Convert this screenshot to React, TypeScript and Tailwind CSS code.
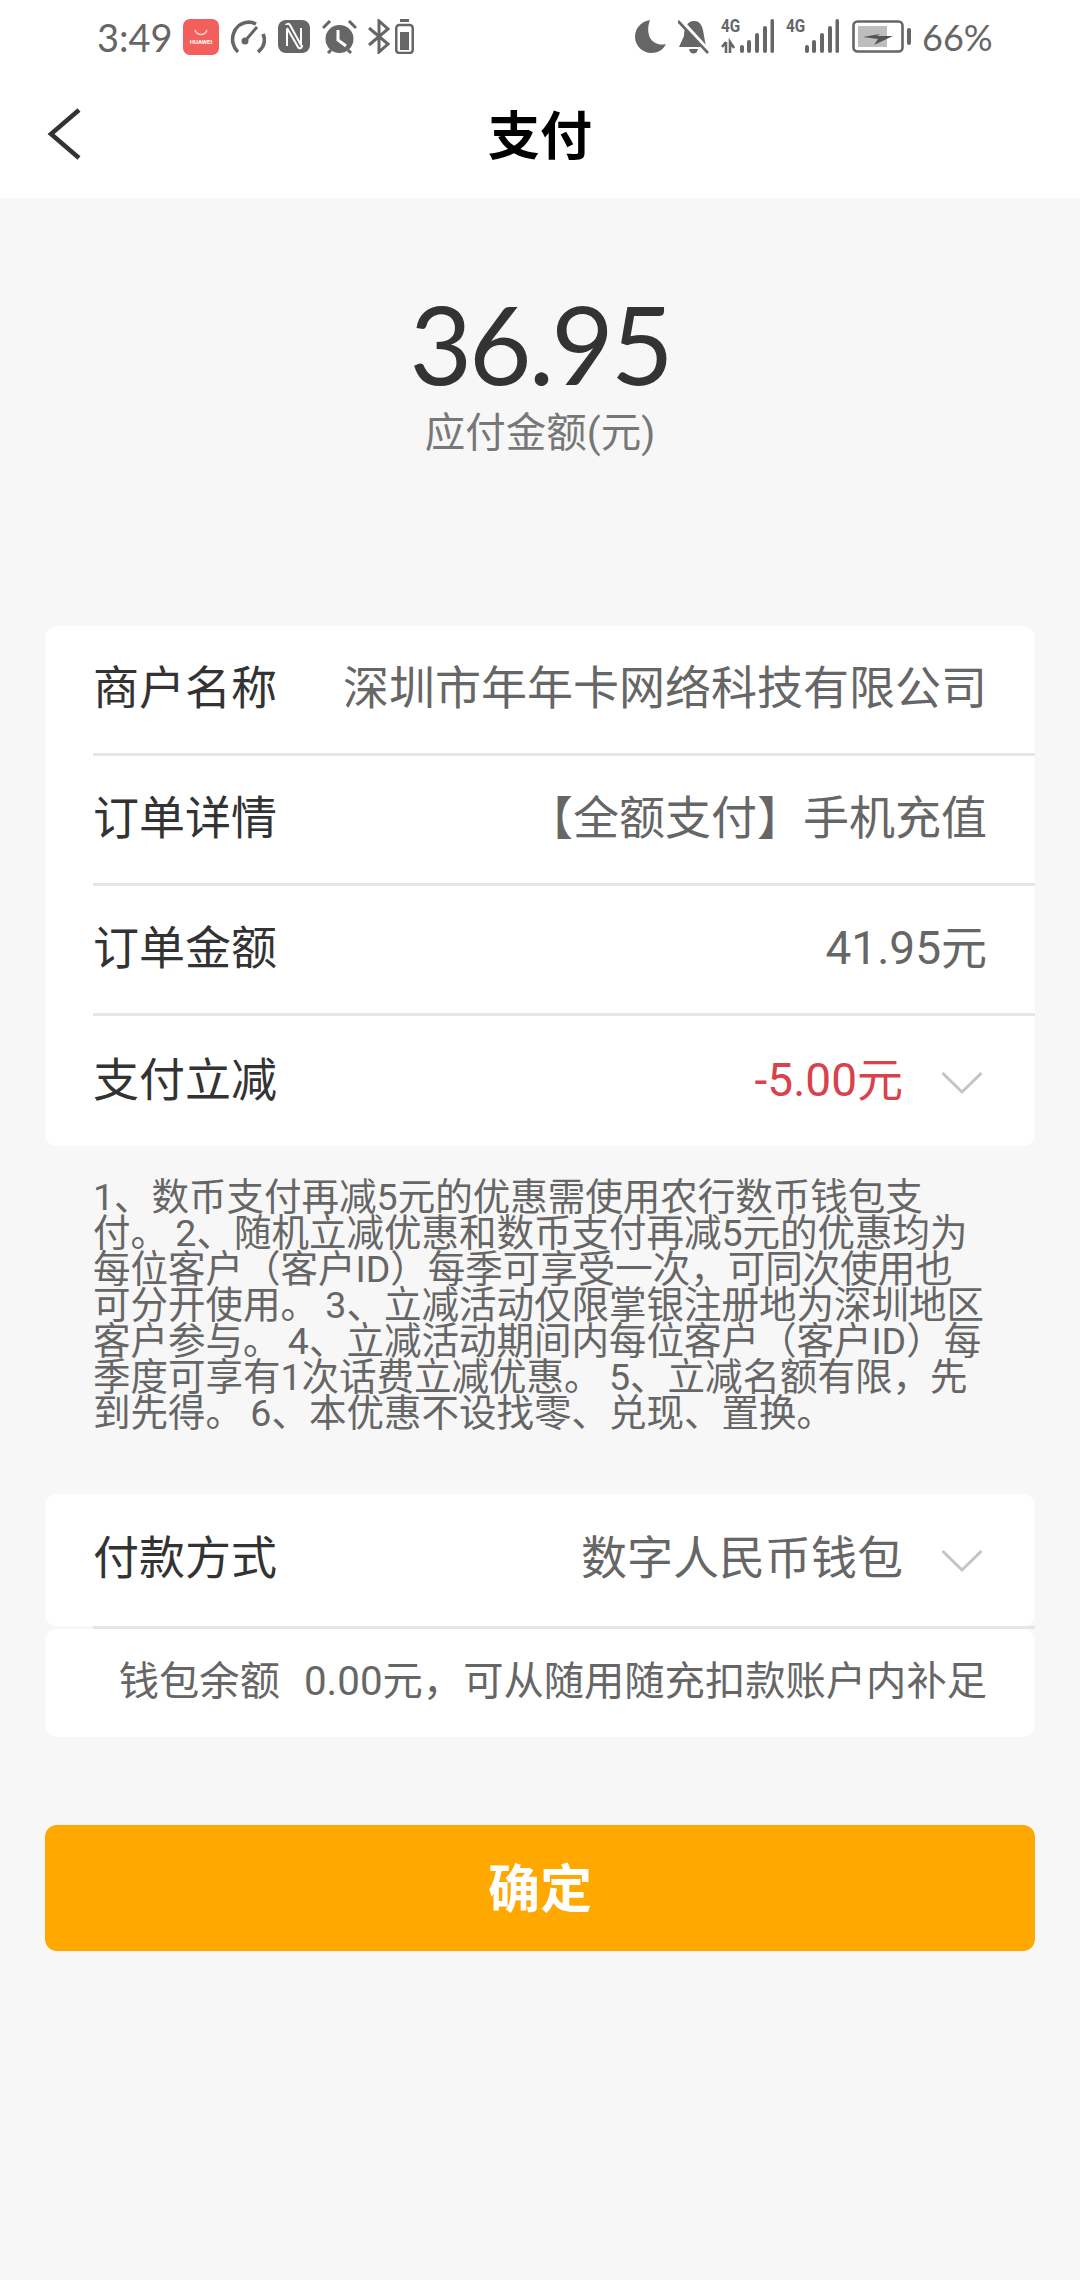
const CJK = "font-['Roboto','Noto_Sans_CJK_SC',sans-serif]";

function Chevron() {
  return (
    <svg width="42" height="24" viewBox="0 0 42 24" fill="none" className="mt-[6px] shrink-0">
      <path d="M1.5 2 L21 21 L40.5 2" stroke="#c4c4c4" strokeWidth="3" />
    </svg>
  );
}

function Bars() {
  return (
    <>
      <rect x="19" y="26" width="4" height="8" rx="2" />
      <rect x="26" y="21" width="4" height="13" rx="2" />
      <rect x="34" y="14" width="4" height="20" rx="2" />
      <rect x="42" y="7" width="4" height="27" rx="2" />
      <rect x="49.5" y="0" width="3.5" height="34" rx="1.7" />
    </>
  );
}

function StatusBar() {
  return (
    <div className="flex h-[73px] items-center justify-between pl-[97px] pr-[91px] text-[#666]">
      <div className="flex items-center">
        <span className="w-[86px] text-[38px] leading-none font-['Lato',sans-serif]">3:49</span>
        <div className="flex h-[36px] w-[36px] flex-col items-center justify-center rounded-[7px] bg-[#f25f5c]">
          <svg width="14" height="7" viewBox="0 0 14 7" fill="none" className="mb-[3px]">
            <path d="M1 1 C3 7 11 7 13 1" stroke="#fbd3d0" strokeWidth="1.4" />
          </svg>
          <span className="text-[6px] font-bold leading-none text-white">HUAWEI</span>
        </div>
        <svg width="36" height="34" viewBox="0 0 36 34" fill="none" stroke="#666" strokeWidth="3.6" className="ml-[11px]">
          <path d="M8 32 C-2 23 2 3 19 2 C22 2 24 3 26 4" />
          <path d="M33 14 C36 21 34 27 28 32" />
          <path d="M15 21 L27 7" strokeWidth="3" />
          <circle cx="15" cy="21" r="3.5" fill="#666" stroke="none" />
        </svg>
        <svg width="32" height="33" viewBox="0 0 32 33" className="ml-[12px]">
          <rect width="32" height="33" rx="8" fill="#666" />
          <path d="M8 5 C8 4 11 3 12 5 L23 25 V8 M9 9 V26 M24 25 C24 29 21 29 20 27 L9 8" stroke="#fff" strokeWidth="2" fill="none" />
        </svg>
        <svg width="35" height="34" viewBox="0 0 35 34" className="ml-[12px]">
          <circle cx="17.5" cy="19" r="14" fill="#666" />
          <path d="M1 8 L8 1 M34 8 L27 1 M6 33 L9 30 M29 33 L26 30" stroke="#666" strokeWidth="3" />
          <path d="M16 10 V20 L24 26" stroke="#fff" strokeWidth="3" fill="none" />
        </svg>
        <svg width="22" height="35" viewBox="0 0 22 35" fill="none" stroke="#666" strokeWidth="3" className="ml-[11px]">
          <path d="M1 9 L20 25 L11 33 V2 L20 10 L1 26" />
        </svg>
        <svg width="19" height="35" viewBox="0 0 19 35" className="ml-[5px]">
          <rect x="5" y="0" width="9" height="3" fill="#666" />
          <rect x="1.25" y="6" width="16.5" height="28" rx="3" fill="none" stroke="#666" strokeWidth="2.5" />
          <rect x="5" y="13" width="9" height="18" fill="#666" />
        </svg>
      </div>
      <div className="flex items-center">
        <svg width="31" height="33" viewBox="0 0 31 33" fill="#666">
          <path d="M15 0 C4 2 0 10 0 17 C0 26 8 33 16 33 C23 33 28 30 31 24 C19 27 9 17 15 0 Z" />
        </svg>
        <svg width="31" height="34" viewBox="0 0 31 34" className="ml-[12px]">
          <path d="M16 1 C24 1 25 9 26 16 L28 27 H1 L6 16 C6 8 9 1 16 1 Z" fill="#666" />
          <path d="M11 29 H20 C19 35 12 35 11 29 Z" fill="#666" />
          <path d="M1 -1 L31 32" stroke="#fff" strokeWidth="5" />
          <path d="M0 1 L30 33" stroke="#666" strokeWidth="2.6" />
        </svg>
        <div className="relative ml-[12px] h-[36px] w-[53px]">
          <span className="absolute left-0 top-[-2px] origin-left scale-x-[0.85] text-[18px] font-bold leading-[18px] font-['Roboto',sans-serif]">4G</span>
          <svg width="53" height="36" viewBox="0 0 53 36" fill="#666" stroke="none" className="absolute left-0 top-0">
            <Bars />
            <path d="M5 23 V34 M5 23 L1 28 M9 34 L9 23 L13 29" stroke="#666" strokeWidth="2.6" fill="none" />
          </svg>
        </div>
        <div className="relative ml-[12px] h-[36px] w-[53px]">
          <span className="absolute left-0 top-[-2px] origin-left scale-x-[0.85] text-[18px] font-bold leading-[18px] font-['Roboto',sans-serif]">4G</span>
          <svg width="53" height="36" viewBox="0 0 53 36" fill="#666" className="absolute left-0 top-0"><Bars /></svg>
        </div>
        <svg width="59" height="33" viewBox="0 0 59 33" className="ml-[13px]">
          <rect x="1.5" y="1.5" width="49" height="30" rx="4" fill="none" stroke="#666" strokeWidth="2.6" />
          <rect x="6" y="6" width="29" height="21" fill="#bdbdbd" />
          <path d="M11 17 L28 14 L25 16 L41 16 L22 25 L26 19 Z" fill="#555" />
          <rect x="55" y="8" width="4" height="17" rx="2" fill="#666" />
        </svg>
        <span className="ml-[11px] w-[67px] text-[36px] leading-none font-['Lato',sans-serif]">66%</span>
      </div>
    </div>
  );
}

function Row({ label, children, border = true }: { label: string; children: React.ReactNode; border?: boolean }) {
  return (
    <div className={`ml-[48px] flex h-[130px] items-center justify-between pb-[3px] pr-[48px] ${border ? "border-b-[3px] border-[#e6e6e6]" : ""}`}>
      <span className="text-[46px] leading-none text-[#333]">{label}</span>
      {children}
    </div>
  );
}

export default function App() {
  return (
    <div className={`flex min-h-[2280px] w-[1080px] flex-col bg-[#f7f7f7] ${CJK}`}>
      <header className="h-[198px] bg-white">
        <StatusBar />
        <div className="relative flex h-[125px] items-center justify-center pt-[4px]">
          <svg width="34" height="52" viewBox="0 0 34 52" fill="none" className="absolute left-[47px] top-[35px]">
            <path d="M32 2 L4 26 L32 50" stroke="#333" strokeWidth="4.5" />
          </svg>
          <h1 className="text-[52px] font-bold leading-none text-black">支付</h1>
        </div>
      </header>

      <section className="flex flex-col items-center pt-[90px]">
        <div className="text-[108px] leading-[110px] tracking-[-3px] text-[#333] font-['Lato',sans-serif]">36.95</div>
        <div className="mt-[9px] text-[40.5px] leading-[52px] text-[#777]">应付金额(元)</div>
      </section>

      <div className="mx-[45px] mt-[167px] rounded-[12px] bg-white">
        <Row label="商户名称">
          <span className="text-[46px] leading-none text-[#666]">深圳市年年卡网络科技有限公司</span>
        </Row>
        <Row label="订单详情">
          <span className="text-[46px] leading-none text-[#666]">【全额支付】手机充值</span>
        </Row>
        <Row label="订单金额">
          <span className="text-[46px] leading-none text-[#666]">41.95元</span>
        </Row>
        <Row label="支付立减" border={false}>
          <span className="mr-[4px] flex items-center gap-[38px]">
            <span className="text-[46px] leading-none text-[#d9414c]">-5.00元</span>
            <Chevron />
          </span>
        </Row>
      </div>

      <p className="ml-[93px] mt-[33px] w-[895px] text-[37.5px] leading-[36px] text-[#666] [word-spacing:-2px]">
        1、数币支付再减5元的优惠需使用农行数币钱包支付。 2、随机立减优惠和数币支付再减5元的优惠均为每位客户（客户ID）每季可享受一次，可同次使用也可分开使用。 3、立减活动仅限掌银注册地为深圳地区客户参与。 4、立减活动期间内每位客户（客户ID）每季度可享有1次话费立减优惠。 5、立减名额有限，先到先得。 6、本优惠不设找零、兑现、置换。
      </p>

      <div className="mx-[45px] mt-[63px] rounded-[12px] bg-white">
        <div className="ml-[48px] flex h-[132px] items-center justify-between pb-[4px] pr-[52px]">
          <span className="text-[46px] leading-none text-[#333]">付款方式</span>
          <span className="flex items-center gap-[38px]">
            <span className="text-[46px] leading-none text-[#666]">数字人民币钱包</span>
            <Chevron />
          </span>
        </div>
      </div>
      <div className="ml-[93px] mr-[45px] h-[3px] bg-[#e6e6e6]" />
      <div className="mx-[45px] flex h-[108px] items-center justify-end rounded-[12px] bg-white pb-[2px] pr-[48px] text-[40.3px] leading-none text-[#666]">
        <span className="mr-[24px]">钱包余额</span>
        <span>0.00元，可从随用随充扣款账户内补足</span>
      </div>

      <button type="button" className="mx-[45px] mt-[88px] h-[126px] rounded-[12px] bg-[#ffa800] pt-[6px] text-[52px] font-bold text-white">
        确定
      </button>
    </div>
  );
}
